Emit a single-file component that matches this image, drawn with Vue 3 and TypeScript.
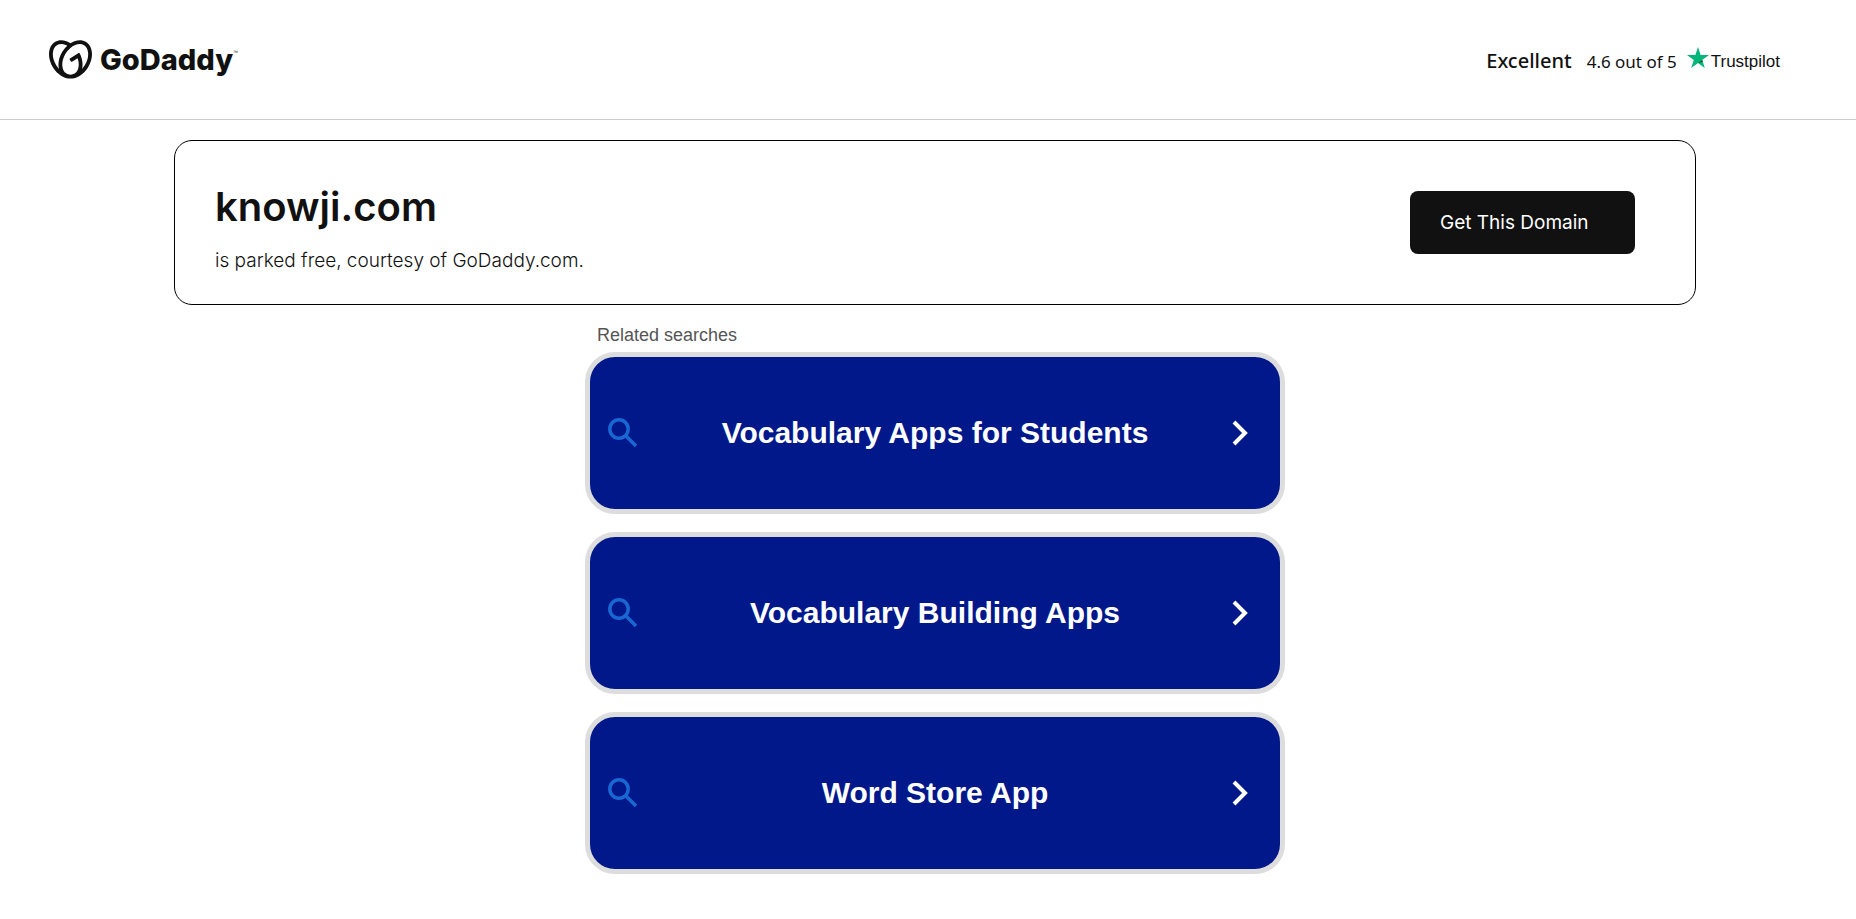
<script setup lang="ts">
const domain = 'knowji.com'
const searches: string[] = [
  'Vocabulary Apps for Students',
  'Vocabulary Building Apps',
  'Word Store App',
]
</script>

<template>
  <header class="topbar">
    <a class="brand" href="#" aria-label="GoDaddy">
      <svg class="brand-mark" viewBox="0 1.3 24 21.5" aria-hidden="true">
        <path fill="currentColor" d="M20.702 2.29c-2.494-1.554-5.778-1.187-8.706.654C9.076 1.104 5.79.736 3.3 2.29c-3.941 2.463-4.42 8.806-1.07 14.167 2.47 3.954 6.333 6.269 9.77 6.226 3.439.043 7.301-2.273 9.771-6.226 3.347-5.361 2.872-11.704-1.069-14.167zM4.042 15.328a12.838 12.838 0 01-1.546-3.541 10.12 10.12 0 01-.336-3.338c.15-1.98.956-3.524 2.27-4.345 1.315-.822 3.052-.87 4.903-.137.281.113.556.24.825.382A15.11 15.11 0 007.5 7.54c-2.035 3.255-2.655 6.878-1.945 9.765a13.247 13.247 0 01-1.514-1.98zm17.465-3.541a12.866 12.866 0 01-1.547 3.54 13.25 13.25 0 01-1.513 1.984c.635-2.589.203-5.76-1.353-8.734a.39.39 0 00-.563-.153l-4.852 3.032a.397.397 0 00-.126.546l.712 1.139a.395.395 0 00.547.126l3.145-1.965c.101.306.203.606.28.916.296 1.086.41 2.214.335 3.337-.15 1.982-.956 3.525-2.27 4.347a4.437 4.437 0 01-2.25.65h-.101a4.432 4.432 0 01-2.25-.65c-1.314-.822-2.121-2.365-2.27-4.347-.074-1.123.039-2.251.335-3.337a13.212 13.212 0 014.05-6.482 10.148 10.148 0 012.849-1.765c1.845-.733 3.586-.685 4.9.137 1.316.822 2.122 2.365 2.271 4.345a10.146 10.146 0 01-.33 3.334z" />
      </svg>
      <span class="brand-name">GoDaddy</span>
      <span class="brand-tm">™</span>
    </a>
    <div class="rating">
      <strong class="rating-word">Excellent</strong>
      <span class="rating-score">4.6 out of 5</span>
      <a class="trustpilot" href="#">
        <svg class="star" viewBox="0 0 22 21" aria-hidden="true">
          <path fill="#00b67a" d="M11 0l2.600 8H22l-6.800 4.900L17.800 21 11 16 4.200 21l2.600-8.100L0 8h8.400z" />
          <path fill="#005128" d="M15.800 14.700l-.6-1.800L11 16z" />
        </svg>
        <span>Trustpilot</span>
      </a>
    </div>
  </header>

  <main class="page">
    <section class="domain-card">
      <div class="domain-text">
        <h1 class="domain-name">{{ domain }}</h1>
        <p class="domain-note">is parked free, courtesy of GoDaddy.com.</p>
      </div>
      <button class="get-domain" type="button">Get This Domain</button>
    </section>

    <section class="related">
      <h2 class="related-title">Related searches</h2>
      <ul class="related-list">
        <li v-for="term in searches" :key="term">
          <a class="search-card" href="#">
            <svg class="icon-search" viewBox="0 0 30 30" aria-hidden="true">
              <circle cx="11" cy="11" r="9.200" />
              <path d="M17.500 17.500l10.500 10.500" />
            </svg>
            <span class="search-term">{{ term }}</span>
            <svg class="icon-chevron" viewBox="0 0 16 26" aria-hidden="true">
              <path d="M2 2L13 13 2 24" />
            </svg>
          </a>
        </li>
      </ul>
    </section>
  </main>
</template>

<style>
body {
  margin: 0;
  background: #fff;
}
</style>

<style scoped>
.topbar {
  display: flex;
  align-items: center;
  justify-content: space-between;
  box-sizing: border-box;
  height: 120px;
  padding: 0 76px 0 49px;
  border-bottom: 1px solid #ccc;
  color: #111;
}
.brand {
  display: flex;
  align-items: center;
  color: #111;
  text-decoration: none;
}
.brand-mark {
  width: 43px;
  height: 39px;
}
.brand-name {
  margin-left: 8px;
  font: 800 29px/40px Inter, sans-serif;
}
.brand-tm {
  align-self: flex-start;
  font: 5px/24px "Liberation Sans", sans-serif;
}
.rating {
  display: flex;
  align-items: baseline;
  padding-top: 4px;
}
.rating-word {
  font: 500 20px/28px "Noto Sans", sans-serif;
}
.rating-score {
  margin-left: 15px;
  font: 400 17px/28px "Noto Sans", sans-serif;
}
.trustpilot {
  display: flex;
  align-items: flex-end;
  gap: 2px;
  margin-left: 10px;
  color: #111;
  font: 17px/20px "Liberation Sans", Arial, sans-serif;
  text-decoration: none;
}
.star {
  width: 22px;
  height: 21px;
  margin-bottom: 4px;
}
.page {
  padding: 20px 0 50px 14px;
}
.domain-card {
  display: flex;
  align-items: center;
  justify-content: space-between;
  box-sizing: border-box;
  min-height: 165px;
  margin: 0 160px;
  padding: 24px 60px 24px 40px;
  border: 1px solid #000;
  border-radius: 18px;
  color: #111;
}
.domain-text {
  padding-top: 6px;
}
.domain-name {
  margin: 0;
  font: 600 40px/60px Inter, sans-serif;
}
.domain-note {
  margin: 10px 0 0;
  font: 300 19px/28px Inter, sans-serif;
}
.get-domain {
  min-width: 225px;
  padding: 16px 30px 15px;
  border: 0;
  border-radius: 8px;
  background: #111;
  color: #fff;
  font: 400 19px/32px Inter, sans-serif;
  text-align: left;
  cursor: pointer;
}
.related {
  max-width: 700px;
  margin: 0 auto;
}
.related-title {
  margin: 18px 12px 5px;
  color: #555;
  font: 400 18px/24px "Liberation Sans", Arial, sans-serif;
}
.related-list {
  display: grid;
  gap: 18px;
  margin: 0;
  padding: 0;
  list-style: none;
}
.search-card {
  display: flex;
  align-items: center;
  box-sizing: border-box;
  min-height: 162px;
  padding: 0 32px 0 18px;
  border: 5px solid #ddd;
  border-radius: 30px;
  background: #00188a;
  color: #fff;
  text-decoration: none;
}
.search-term {
  flex: 1;
  font: 700 30px/36px "Liberation Sans", Arial, sans-serif;
  text-align: center;
}
.icon-search,
.icon-chevron {
  flex: none;
  fill: none;
}
.icon-search {
  width: 30px;
  height: 30px;
  stroke: #1967d2;
  stroke-width: 3.500;
}
.icon-chevron {
  width: 16px;
  height: 26px;
  stroke: #fff;
  stroke-width: 4;
}
</style>
